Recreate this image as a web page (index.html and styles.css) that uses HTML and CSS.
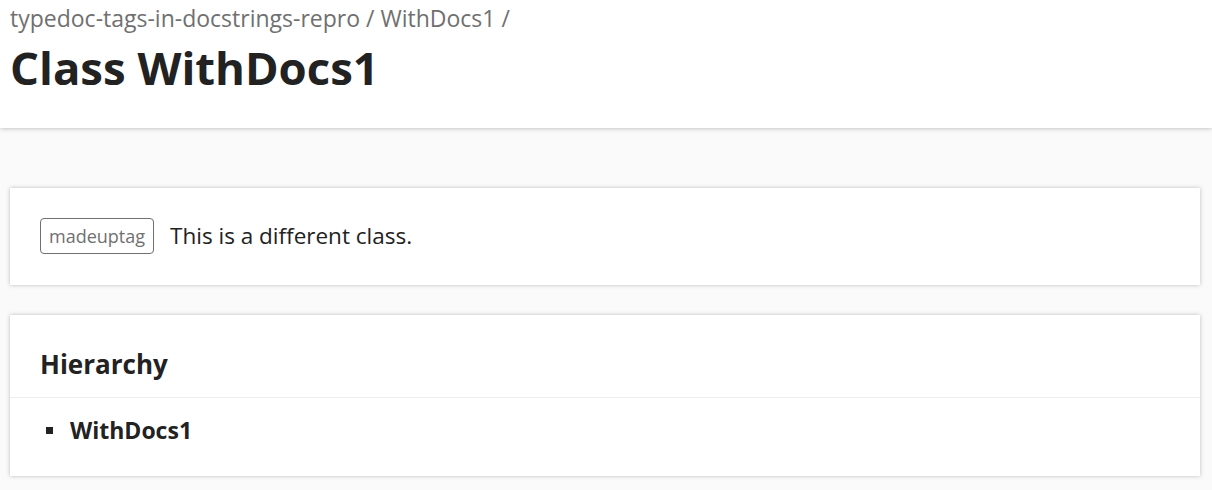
FILE: index.html
```html
<!DOCTYPE html>
<html>
<head>
<meta charset="utf-8">
<link rel="stylesheet" href="styles.css">
</head>
<body>
<header class="header">
  <div class="breadcrumb"><a>typedoc-tags-in-docstrings-repro</a> / <a>WithDocs1</a> /</div>
  <h1 class="title">Class WithDocs1</h1>
</header>
<main class="content">
  <section class="panel comment">
    <span class="tag">madeuptag</span>
    <span class="desc">This is a different class.</span>
  </section>
  <section class="panel hierarchy">
    <h3 class="panel-title">Hierarchy</h3>
    <ul class="tree">
      <li class="tree-item"><span class="bullet"></span><span class="target">WithDocs1</span></li>
    </ul>
  </section>
</main>
</body>
</html>
```

FILE: styles.css
```css
html, body {
  margin: 0;
  padding: 0;
}
body {
  background: #fafafa;
  font-family: "Open Sans", "Noto Sans", sans-serif;
  color: #222;
  width: 1212px;
  height: 490px;
  overflow: hidden;
}
.header {
  background: #fff;
  height: 128px;
  box-shadow: 0 0 5px rgba(0,0,0,0.3);
  padding: 0 10px;
  box-sizing: border-box;
  position: relative;
  z-index: 1;
}
.breadcrumb {
  padding-top: 2px;
  font-size: 23px;
  line-height: 32px;
  color: #707070;
}
.title {
  margin: 0;
  padding-top: 3px;
  font-size: 45.5px;
  line-height: 60px;
  font-weight: 700;
  color: #222;
}
.content {
  padding: 60px 12px 0 10px;
  display: flex;
  flex-direction: column;
  gap: 30px;
}
.panel {
  background: #fff;
  box-shadow: 0 0 4px rgba(0,0,0,0.25);
}
.comment {
  height: 97px;
  box-sizing: border-box;
  display: flex;
  align-items: center;
  padding: 0 30px 2px;
  gap: 16px;
}
.tag {
  border: 1px solid #707070;
  border-radius: 4px;
  color: #707070;
  font-size: 18px;
  height: 36px;
  box-sizing: border-box;
  padding: 0 8px;
  display: flex;
  align-items: center;
}
.desc {
  font-size: 22.5px;
}
.hierarchy {
  height: 161px;
  box-sizing: border-box;
}
.panel-title {
  margin: 0;
  padding: 30px 30px 14px;
  font-size: 26px;
  line-height: 38px;
  font-weight: 700;
  border-bottom: 1px solid #eee;
}
.tree {
  list-style: none;
  margin: 0;
  padding: 14px 30px 0 36px;
}
.tree-item {
  display: flex;
  align-items: center;
  gap: 17px;
  font-size: 23px;
  font-weight: 700;
  line-height: 36px;
}
.bullet {
  width: 7px;
  height: 7px;
  background: #222;
}
```
